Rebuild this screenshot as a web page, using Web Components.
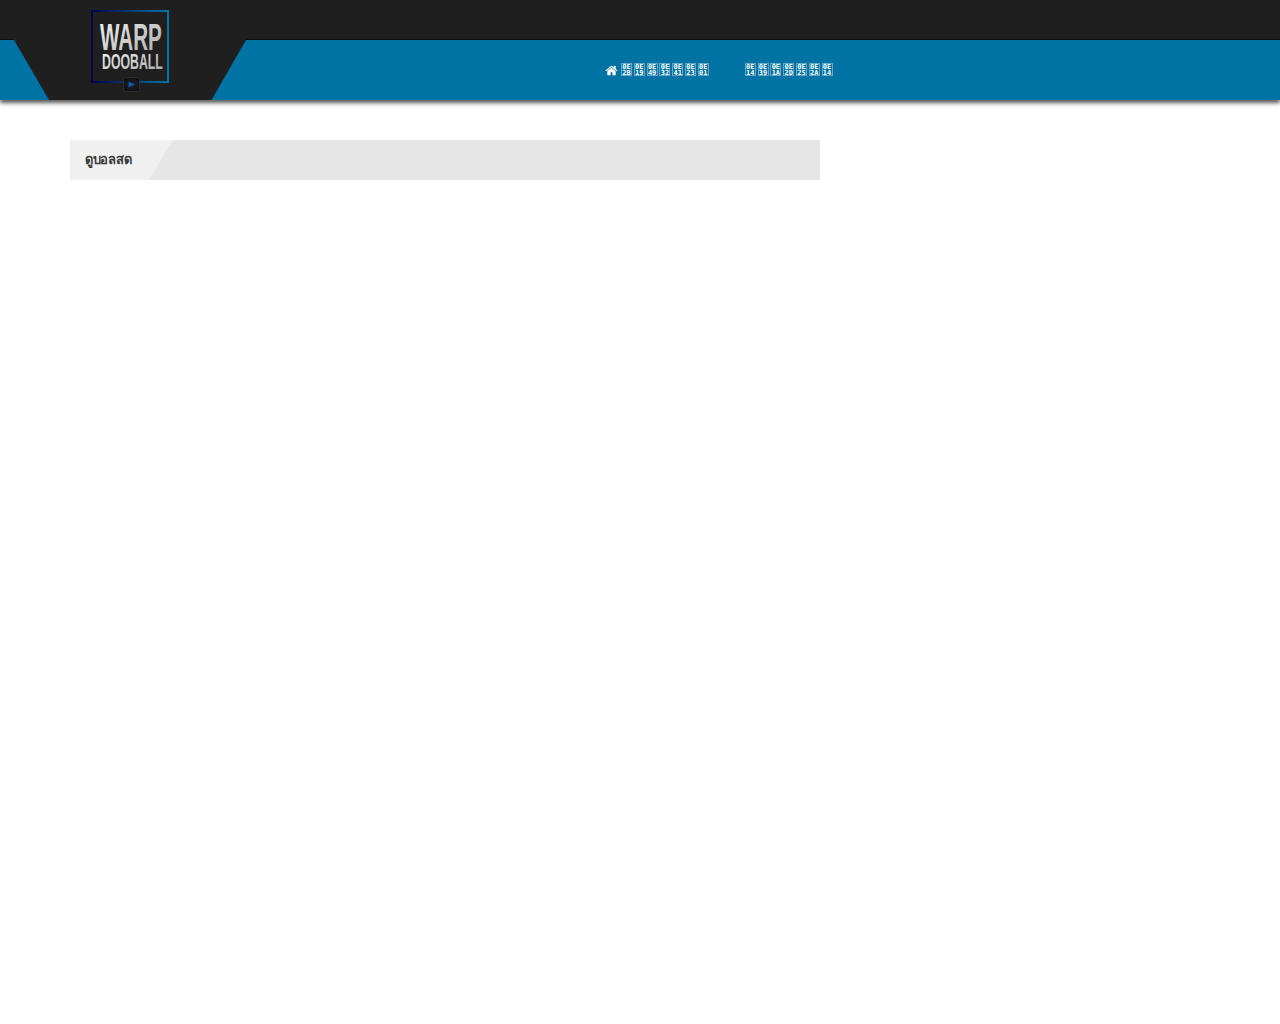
<!DOCTYPE html>
<html lang="th">
<head>
<meta charset="utf-8">
<title>ดูบอลสด</title>
<style>
html, body { margin: 0; padding: 0; background: #fff; }
body { font-family: "Noto Sans", "Liberation Sans", sans-serif; }
</style>
</head>
<body>
<site-header>
    <site-logo slot="logo"></site-logo>
    <nav-link icon="home" href="#">หน้าแรก</nav-link>
    <nav-link href="#">ดูบอลสด</nav-link>
</site-header>
<page-main>
    <section-title>ดูบอลสด</section-title>
</page-main>

<script>
class SiteHeader extends HTMLElement {
    constructor() {
        super();
        this.attachShadow({ mode: 'open' });
    }

    connectedCallback() {
        this.shadowRoot.innerHTML = `
            <style>
                :host {
                    display: block;
                    position: relative;
                    height: 100px;
                    background: linear-gradient(#1f1f1f 0 39px, #111 39px 40px, #0073a5 40px);
                    box-shadow: 0 3px 4px rgba(0, 0, 0, .65);
                }
                .wrap {
                    display: flex;
                    height: 100%;
                    position: relative;
                }
                .logo {
                    width: 260px;
                    padding-top: 10px;
                    display: flex;
                    justify-content: center;
                    box-sizing: border-box;
                }
                nav {
                    display: flex;
                    gap: 36px;
                    margin-left: 345px;
                    padding-top: 39px;
                    height: 60px;
                    align-items: center;
                }
                .cut {
                    position: absolute;
                    left: 14px;
                    top: 39px;
                    width: 232px;
                    height: 61px;
                    background: #1f1f1f;
                    clip-path: polygon(0 0, 100% 0, 100% 1px, 197.500px 100%, 35px 100%, 0 1px);
                }
            </style>
            <div class="cut"></div>
            <div class="wrap">
                <div class="logo"><slot name="logo"></slot></div>
                <nav><slot></slot></nav>
            </div>
        `;
    }
}

class SiteLogo extends HTMLElement {
    constructor() {
        super();
        this.attachShadow({ mode: 'open' });
    }

    connectedCallback() {
        this.shadowRoot.innerHTML = `
            <style>
                :host { display: block; width: 80px; height: 84px; }
                svg { display: block; }
                text {
                    font-family: "Liberation Sans", sans-serif;
                    font-weight: 700;
                    fill: url(#silver);
                }
            </style>
            <svg width="80" height="84" viewBox="0 0 80 84">
                <defs>
                    <linearGradient id="frame" x1="0" x2="1" y1="0" y2="0">
                        <stop offset="0" stop-color="#02024e"/>
                        <stop offset="1" stop-color="#0073a5"/>
                    </linearGradient>
                    <linearGradient id="silver" x1="0" x2="1" y1="0" y2="1">
                        <stop offset="0" stop-color="#f4f4f4"/>
                        <stop offset="1" stop-color="#a8a8a8"/>
                    </linearGradient>
                    <radialGradient id="btn" cx=".5" cy=".5" r=".7">
                        <stop offset="0" stop-color="#1c2430"/>
                        <stop offset="1" stop-color="#0b0b0d"/>
                    </radialGradient>
                </defs>
                <rect x="2" y="1" width="76" height="71" fill="none" stroke="url(#frame)" stroke-width="2"/>
                <text transform="translate(10 40) scale(.55 1)" font-size="37.5">WARP</text>
                <text transform="translate(12 59) scale(.56 1)" font-size="22">DOOBALL</text>
                <rect x="33.500" y="67.500" width="16" height="14" rx="2" fill="url(#btn)" stroke="#2e2e2e"/>
                <path d="M38.500 71.500 L45 74.500 L38.500 77.500 Z" fill="#0c5c9e"/>
            </svg>
        `;
    }
}

class NavLink extends HTMLElement {
    constructor() {
        super();
        this.attachShadow({ mode: 'open' });
    }

    connectedCallback() {
        const label = this.textContent.trim();
        const icon = this.getAttribute('icon') === 'home'
            ? `<svg width="13" height="13" viewBox="0 0 1792 1792"><path fill="#fff" d="M1472 992v480q0 26-19 45t-45 19h-384v-384h-256v384h-384q-26 0-45-19t-19-45v-480q0-1 .5-3t.5-3l575-474 575 474q1 2 1 6zm223-69l-62 74q-8 9-21 11h-3q-13 0-21-7l-692-577-692 577q-12 8-24 7-13-2-21-11l-62-74q-8-10-7-23.500t11-21.500l719-599q32-26 76-26t76 26l244 204v-195q0-14 9-23t23-9h192q14 0 23 9t9 23v408l219 182q10 8 11 21.500t-7 23.500z"/></svg>`
            : '';
        const boxes = [...label].map(ch => {
            const hex = ch.codePointAt(0).toString(16).toUpperCase().padStart(4, '0');
            return `<span class="box"><b>${hex.slice(0, 2)}</b><b>${hex.slice(2)}</b></span>`;
        }).join('');
        this.shadowRoot.innerHTML = `
            <style>
                :host { display: block; }
                a {
                    display: flex;
                    align-items: center;
                    gap: 3px;
                    color: #fff;
                    text-decoration: none;
                }
                svg { margin-top: 2px; }
                .label { display: flex; gap: 1.8px; }
                .box {
                    display: flex;
                    flex-direction: column;
                    gap: 1px;
                    box-sizing: border-box;
                    width: 11px;
                    height: 13px;
                    border: 1px solid #6aa6c4;
                    font: 700 7px/7px "DejaVu Sans Mono", monospace;
                    text-align: center;
                    white-space: nowrap;
                }
                .box b { display: block; font-weight: 700; height: 5px; }
            </style>
            <a href="${this.getAttribute('href') || '#'}" aria-label="${label}">${icon}<span class="label">${boxes}</span></a>
        `;
    }
}

class PageMain extends HTMLElement {
    constructor() {
        super();
        this.attachShadow({ mode: 'open' });
    }

    connectedCallback() {
        this.shadowRoot.innerHTML = `
            <style>
                :host { display: block; padding: 40px 0 0 70px; }
                .column { width: 750px; }
            </style>
            <div class="column"><slot></slot></div>
        `;
    }
}

class SectionTitle extends HTMLElement {
    constructor() {
        super();
        this.attachShadow({ mode: 'open' });
    }

    connectedCallback() {
        this.shadowRoot.innerHTML = `
            <style>
                :host {
                    display: block;
                    height: 40px;
                    background: #f0f0f0;
                }
                .bar {
                    display: flex;
                    align-items: center;
                    height: 38px;
                    padding: 0 0 2px 15px;
                    color: #3a3a3a;
                    font-size: 13px;
                    font-weight: 700;
                    letter-spacing: -.3px;
                    position: relative;
                }
                .bar::after {
                    content: "";
                    position: absolute;
                    left: 79px;
                    right: 0;
                    top: 0;
                    bottom: 0;
                    background: #e6e6e6;
                    clip-path: polygon(24px 0, 100% 0, 100% 100%, 0 100%);
                }
            </style>
            <div class="bar"><slot></slot></div>
        `;
    }
}

customElements.define('site-header', SiteHeader);
customElements.define('site-logo', SiteLogo);
customElements.define('nav-link', NavLink);
customElements.define('page-main', PageMain);
customElements.define('section-title', SectionTitle);
</script>
</body>
</html>
